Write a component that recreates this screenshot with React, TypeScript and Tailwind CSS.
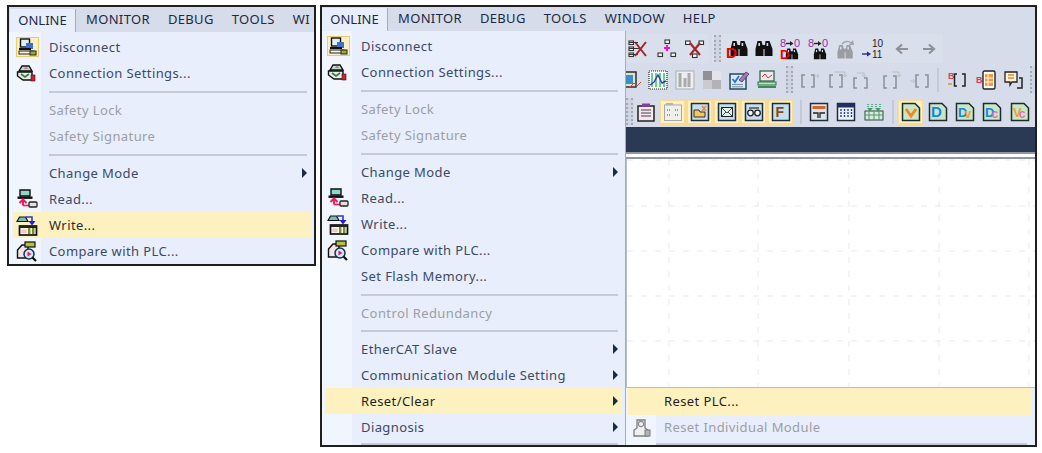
import type { ReactNode } from "react";

const FONT = "font-['Noto_Sans','Open_Sans',sans-serif]";

function Ico({ children, w = 20, h = 20, pad = 0 }: { children: ReactNode; w?: number; h?: number; pad?: number }) {
  return (
    <svg width={w} height={h + pad * 2} viewBox={`0 ${-pad} ${w} ${h + pad * 2}`} className="shrink-0">
      {children}
    </svg>
  );
}

/* ---- menu icons ---- */
const DisconnectIcon = () => (
  <span className="flex h-[20px] w-[23px] items-center justify-center border border-[#ecc96c] bg-[#fdf0c4]">
    <Ico w={19} h={18}>
      <rect x="2.5" y="1" width="9" height="8" fill="#dff0f7" stroke="#111" strokeWidth="1.4" />
      <rect x="8" y="5" width="7" height="6" fill="#3d6fd0" />
      <rect x="1" y="10" width="12" height="2" fill="#111" />
      <rect x="1" y="13" width="14" height="3" fill="#f5f5f0" stroke="#222" />
      <rect x="12" y="13" width="6" height="4" fill="#9dad2e" stroke="#222" />
    </Ico>
  </span>
);
const ConnSettingsIcon = () => (
  <Ico>
    <path d="M3 8 L6 3 H13 L16 8 Z" fill="#b9dcc8" stroke="#111" strokeWidth="1.4" />
    <path d="M8 6 L10 3.5 L12 6 Z" fill="#d86b9a" />
    <path d="M1.5 9 H16 V17 H7 L1.5 13 Z" fill="#e7efe2" stroke="#111" strokeWidth="1.4" />
    <path d="M5 11 L9 14 L13 11" fill="none" stroke="#2d7d4a" strokeWidth="1.6" />
    <rect x="15" y="12" width="4" height="6" fill="#d3202c" stroke="#411" strokeWidth="0.6" />
  </Ico>
);
const ReadIcon = () => (
  <Ico w={22} h={20}>
    <path d="M4 1 H14 V7 H4 Z" fill="#8fd6c7" stroke="#111" strokeWidth="1.4" />
    <rect x="1.5" y="7.5" width="15" height="2.4" fill="#111" />
    <path d="M7 16.5 V12 M3.5 14 L7 10.5 L10.5 14" stroke="#ef1d5e" strokeWidth="2" fill="none" />
    <path d="M7 16.5 H14" stroke="#ef1d5e" strokeWidth="1.6" fill="none" />
    <rect x="13" y="13" width="8" height="5" rx="1" fill="#e9dde0" stroke="#222" strokeWidth="1.3" />
  </Ico>
);
const WriteIcon = () => (
  <Ico w={22} h={21}>
    <path d="M1 6.5 L3.5 2 H9.5 L12 6.5 Z" fill="#78bdb6" stroke="#111" strokeWidth="1.2" />
    <path d="M10 2 H16 V6" stroke="#2f37d8" strokeWidth="1.6" fill="none" />
    <path d="M12.5 6 H19.5 L16 10.5 Z" fill="#2518e6" />
    <rect x="3.5" y="11" width="17" height="9" fill="#f7f5df" stroke="#111" strokeWidth="1.7" />
    <rect x="3.5" y="11" width="17" height="2" fill="#222" />
    <rect x="5.5" y="14.5" width="5" height="3.5" fill="#f4c5cf" />
    <rect x="12" y="13" width="2.4" height="6" fill="#7e8d2b" />
    <rect x="16" y="13" width="2.4" height="6" fill="#7e8d2b" />
  </Ico>
);
const CompareIcon = () => (
  <Ico w={22} h={21}>
    <path d="M1.5 9 L6 4 H12 V17 H1.5 Z" fill="#f5e5e8" stroke="#111" strokeWidth="1.4" />
    <rect x="9" y="1" width="10" height="5" fill="#b6c23a" stroke="#111" strokeWidth="1.2" />
    <circle cx="13" cy="13" r="5" fill="#cdeaf4" stroke="#17324f" strokeWidth="1.5" />
    <path d="M11.5 10.5 L15.5 13 L11.5 15.5 Z" fill="#e5175e" />
    <path d="M16.5 16.5 L20 20" stroke="#111" strokeWidth="2.2" />
  </Ico>
);
const ResetModuleIcon = () => (
  <Ico w={20} h={20}>
    <path d="M2 12 L5 10 V2 H13 V10 L16 12 V18 H2 Z" fill="#eef0f3" stroke="#7d7d7d" strokeWidth="1.3" />
    <circle cx="9" cy="6" r="2.6" fill="none" stroke="#8d8d8d" strokeWidth="1.1" />
    <rect x="13" y="12" width="5" height="6" fill="#b3b3b3" stroke="#7d7d7d" />
  </Ico>
);

/* ---- toolbar icons ---- */
const Boxes = ({ pts, stroke = "#333" }: { pts: number[][]; stroke?: string }) => (
  <>
    {pts.map(([x, y], i) => (
      <rect key={i} x={x} y={y} width="4.5" height="3.5" fill="#f4f6fa" stroke={stroke} strokeWidth="1.1" />
    ))}
  </>
);
const ListX = () => (
  <Ico>
    <Boxes pts={[[1, 2], [1, 8], [1, 14]]} />
    <path d="M1 3 H10 V4 H1 Z M1 9 H11 V10 H1 Z M1 15 H10 V16 H1 Z" fill="#333" />
    <path d="M7 3 L18 17 M18 3 L7 17" stroke="#a3262a" strokeWidth="2" />
  </Ico>
);
const NodeAdd = () => (
  <Ico>
    <Boxes pts={[[8, 1], [1, 14], [14, 14]]} />
    <path d="M7 9 H13 M10 6 V12" stroke="#ef10d0" strokeWidth="2" />
  </Ico>
);
const NodeX = () => (
  <Ico>
    <Boxes pts={[[0.6, 2], [14, 2], [7.5, 15]]} />
    <path d="M5 4 L15 16 M15 4 L5 16" stroke="#a3262a" strokeWidth="2.2" />
  </Ico>
);
const Binoc = ({ x = 0, y = 0, c = "#111", s = 1 }: { x?: number; y?: number; c?: string; s?: number }) => (
  <g transform={`translate(${x} ${y}) scale(${s})`} fill={c}>
    <path d="M2.5 0 H6.5 L8.5 8 V15 H0.5 V8 Z" />
    <path d="M10.5 0 H14.5 L17.5 8 V15 H9.5 V8 Z" />
    <rect x="7" y="4" width="4" height="4" />
    <rect x="3.4" y="2" width="1.6" height="3" fill="#d8dcec" />
    <rect x="11.6" y="2" width="1.6" height="3" fill="#d8dcec" />
  </g>
);
const TinyLabel = ({ x, y, fill, size, children, weight }: { x: number; y: number; fill: string; size: number; children: ReactNode; weight?: number }) => (
  <text x={x} y={y} fill={fill} fontSize={size} fontWeight={weight} fontFamily="Liberation Sans, sans-serif">
    {children}
  </text>
);
const BinocD = () => (
  <Ico w={22} h={20} pad={3}>
    <Binoc x={4} y={2} />
    <TinyLabel x={0} y={19} fill="#ee0000" size={15} weight={700}>D</TinyLabel>
  </Ico>
);
const BinocPlain = () => (
  <Ico w={20} h={20}>
    <Binoc x={1} y={2} />
  </Ico>
);
const BinocHex = ({ red }: { red?: boolean }) => (
  <Ico w={22} h={20} pad={3}>
    <TinyLabel x={0} y={8} fill="#9a2fa8" size={11}>8</TinyLabel>
    <path d="M6 4.5 H11" stroke="#222" strokeWidth="1.4" />
    <path d="M10 2 L13.5 4.5 L10 7 Z" fill="#222" />
    <TinyLabel x={14} y={8} fill="#9a2fa8" size={11}>0</TinyLabel>
    <Binoc x={5.5} y={9.5} s={0.72} />
    {red && <TinyLabel x={0} y={20} fill="#ee0000" size={13} weight={700}>D</TinyLabel>}
  </Ico>
);
const BinocGrey = () => (
  <Ico w={20} h={22}>
    <path d="M6 6 A6 6 0 0 1 15 5" stroke="#a0a4ab" strokeWidth="1.4" fill="none" />
    <path d="M13 7 L18 7 L17 2 Z" fill="#a0a4ab" />
    <Binoc x={1} y={7} c="#9a9ea4" s={0.9} />
  </Ico>
);
const Convert = () => (
  <Ico w={24} h={21} pad={2}>
    <TinyLabel x={10} y={9} fill="#222" size={10}>10</TinyLabel>
    <path d="M0 16 H6" stroke="#1a2a9a" strokeWidth="1.4" />
    <path d="M5 13.5 L9 16 L5 18.5 Z" fill="#1a2a9a" />
    <TinyLabel x={10} y={20} fill="#222" size={10}>11</TinyLabel>
  </Ico>
);
const ArrowG = ({ right }: { right?: boolean }) => (
  <Ico w={14} h={12}>
    <path d={right ? "M1 6 H11 M7 1.5 L12 6 L7 10.5" : "M13 6 H3 M7 1.5 L2 6 L7 10.5"} stroke="#8e9298" strokeWidth="2.2" fill="none" />
  </Ico>
);
const PartialTrend = () => (
  <Ico w={16} h={20}>
    <rect x="-4" y="2" width="14" height="15" fill="#d5e6cf" stroke="#222" strokeWidth="1.4" />
    <rect x="0" y="5" width="7" height="9" fill="#3d8fc2" />
    <path d="M4 17 L8 13 L11 16 L15 12" stroke="#d4413b" strokeWidth="1" fill="none" />
  </Ico>
);
const ChartIcon = ({ grey }: { grey?: boolean }) => (
  <Ico>
    <rect x="1" y="1" width="18" height="18" fill={grey ? "#eceef1" : "#fff"} stroke={grey ? "#b5b7bb" : "#222"} strokeWidth="1.2" strokeDasharray={grey ? "none" : "1 1"} />
    {grey ? (
      <path d="M5 3 V17 M10 8 V17 M14 3 V17" stroke="#a8aaae" strokeWidth="3" />
    ) : (
      <>
        <path d="M4 3 V17 M8 3 V17 M12 3 V17 M16 3 V17" stroke="#1bc25a" strokeWidth="1.4" />
        <path d="M2 15 L6 12 L10 5 L14 13 L18 11" stroke="#3a2fc0" strokeWidth="1.4" fill="none" />
      </>
    )}
  </Ico>
);
const CheckersGrey = () => (
  <Ico>
    <rect x="1" y="1" width="9" height="9" fill="#8f9195" />
    <rect x="10" y="1" width="9" height="9" fill="#e3e4e8" />
    <rect x="1" y="10" width="9" height="9" fill="#c9cbcf" />
    <rect x="10" y="10" width="9" height="9" fill="#b1b3b7" />
  </Ico>
);
const NoteEdit = () => (
  <Ico>
    <rect x="1" y="4" width="16" height="15" fill="#d7e8f7" stroke="#274860" strokeWidth="1.5" />
    <path d="M3.5 9 L6 12 L10 6" stroke="#1f77d0" strokeWidth="1.8" fill="none" />
    <path d="M3 14.5 H14 M3 16.8 H14" stroke="#7a93a8" />
    <path d="M10 10 L17 2 L20 4 L13 12 Z" fill="#a678b8" stroke="#402050" strokeWidth="0.7" />
  </Ico>
);
const PcGreen = () => (
  <Ico>
    <rect x="3" y="1" width="14" height="10" fill="#f4e9e4" stroke="#2d6a4e" strokeWidth="1.3" />
    <path d="M5 7 L8 4 L11 8 L15 5" stroke="#d13b52" strokeWidth="1" fill="none" />
    <rect x="1" y="12" width="18" height="3" fill="#c3e3b7" stroke="#2d6a4e" />
    <rect x="1" y="16" width="18" height="2" fill="#3c8a5b" />
  </Ico>
);
const Bracket = ({ d, arrow }: { d: string; arrow: string }) => (
  <Ico>
    <path d={d} stroke="#8c9097" strokeWidth="1.5" fill="none" />
    <path d={arrow} stroke="#bcbfc4" strokeWidth="1" fill="none" />
  </Ico>
);
const BitBracket = () => (
  <Ico>
    <TinyLabel x={0} y={9} fill="#e33d5a" size={9} weight={700}>B</TinyLabel>
    <path d="M0 14 H4" stroke="#ef8a2b" strokeWidth="1.5" />
    <path d="M9 4 H6.5 V16 H9 M14 4 H17 V16 H14" stroke="#222" strokeWidth="1.5" fill="none" />
  </Ico>
);
const BitSheet = () => (
  <Ico>
    <TinyLabel x={0} y={13} fill="#ee2d60" size={9} weight={700}>B</TinyLabel>
    <rect x="7" y="1" width="12" height="18" rx="1.5" fill="#fff" stroke="#222" strokeWidth="1.4" />
    <rect x="9" y="4" width="8" height="12" fill="#f59a3a" />
    <path d="M9 8 H17 M9 12 H17 M12 4 V16" stroke="#fff" />
  </Ico>
);
const Balloon = () => (
  <Ico>
    <path d="M1 2 H13 V12 H8 L6 15 V12 H1 Z" fill="#fff3d8" stroke="#222" strokeWidth="1.3" />
    <path d="M4 5 H10 M4 8 H10" stroke="#e8862b" strokeWidth="1.4" />
    <path d="M15 8 H18 V18 H13" stroke="#222" strokeWidth="1.5" fill="none" />
  </Ico>
);
const Clip = () => (
  <Ico>
    <rect x="2" y="4" width="16" height="15" fill="#f6e7ef" stroke="#222" strokeWidth="1.5" />
    <rect x="6" y="1.5" width="8" height="3" fill="#8a3fa0" />
    <path d="M5 8 H15 M5 11 H15 M5 14 H15" stroke="#444" />
  </Ico>
);
const Tile = ({ children, bg = "#c5dff0" }: { children: ReactNode; bg?: string }) => (
  <Ico>
    <rect x="1.5" y="1.5" width="17" height="17" fill={bg} stroke="#1f2d3a" strokeWidth="1.5" />
    {children}
  </Ico>
);
const GreyGrid = () => (
  <Ico>
    <rect x="1.5" y="3" width="17" height="15.5" fill="#efefec" stroke="#a9a9a4" />
    <rect x="3" y="1" width="7" height="2" fill="#b6b6b0" />
    <path d="M4 8 H8 M12 8 H16 M4 13 H8 M12 13 H16" stroke="#9c9c98" strokeDasharray="1 1" strokeWidth="2" />
  </Ico>
);
const ToolTiles = [
  <Tile key="folder">
    <path d="M4 8 H9 L10 10 H15 V15 H4 Z" fill="#f3c75e" stroke="#222" strokeWidth="0.9" />
    <path d="M12 4 L16 9 M16 4 L12 9" stroke="#f0874a" strokeWidth="1.6" />
  </Tile>,
  <Tile key="mail">
    <rect x="4.5" y="5.5" width="11" height="9" fill="#e5f0e7" stroke="#222" />
    <path d="M5 6 L10 11 L15 6 M5 14 L9 10 M15 14 L11 10" stroke="#2d5b49" fill="none" />
  </Tile>,
  <Tile key="glasses">
    <circle cx="6.5" cy="11" r="2.8" fill="#f4f4f4" stroke="#222" strokeWidth="1.3" />
    <circle cx="13.5" cy="11" r="2.8" fill="#f4f4f4" stroke="#222" strokeWidth="1.3" />
    <path d="M5 6 H15" stroke="#444" strokeWidth="1.4" />
  </Tile>,
  <Tile key="f">
    <TinyLabel x={4.5} y={15} fill="#8a4a12" size={14} weight={700}>F</TinyLabel>
  </Tile>,
];
const LayoutTile = () => (
  <Tile bg="#dde4ea">
    <rect x="3.5" y="4" width="13" height="3" fill="#d4682c" />
    <path d="M4 11 H9 V16 M11 16 V11 H16" stroke="#222" strokeWidth="1.3" fill="none" />
  </Tile>
);
const DotsTile = () => (
  <Tile bg="#eef5fb">
    <rect x="1.5" y="1.5" width="17" height="4" fill="#1f2f6a" />
    <path d="M5 7 V16 M8.5 7 V16 M12 7 V16 M15.5 7 V16" stroke="#2238d8" strokeWidth="1.4" strokeDasharray="2 1" />
  </Tile>
);
const NetTile = () => (
  <Ico>
    <path d="M4 2 V6 M8 2 V6 M12 2 V6 M16 2 V6" stroke="#2c9a5e" strokeWidth="1.4" strokeDasharray="1 1" />
    <path d="M3 6 H9 L6 9 Z M11 6 H17 L14 9 Z" fill="#31a465" />
    <rect x="1" y="9" width="18" height="9" fill="#d6ecdc" stroke="#2d4a3c" />
    <path d="M1 13 H19 M5 9 V18 M10 9 V18 M15 9 V18" stroke="#5b8f72" />
  </Ico>
);
const Doc = ({ bg, label, color, second, secondColor }: { bg: string; label: string; color: string; second?: string; secondColor?: string }) => (
  <Ico>
    <path d="M1.5 1.5 H14 L18.5 6 V18.5 H1.5 Z" fill={bg} stroke="#1f2d2a" strokeWidth="1.5" />
    <text x={3} y={15} fill={color} fontSize={second ? 13 : 15} fontWeight={700} fontFamily="Liberation Sans, sans-serif">
      {label}
      {second && (
        <tspan dx={-3} dy={1} fill={secondColor ?? color} fontSize={12}>
          {second}
        </tspan>
      )}
    </text>
  </Ico>
);
const DocCheck = () => (
  <Ico>
    <path d="M1.5 1.5 H14 L18.5 6 V18.5 H1.5 Z" fill="#c9e6c7" stroke="#1f2d2a" strokeWidth="1.5" />
    <path d="M5 7 L10 14 L15 7" stroke="#f08a1f" strokeWidth="3" fill="none" />
  </Ico>
);

/* ---- toolbar layout pieces ---- */
function Slot({ className = "w-[27px]", children }: { className?: string; children: ReactNode }) {
  return <div className={`flex shrink-0 items-center justify-center ${className}`}>{children}</div>;
}
const Grip = ({ className = "" }: { className?: string }) => (
  <div className={`h-[27px] w-[7px] shrink-0 border-x-2 border-dotted border-[#a3a8b2] bg-[#cfd5e2] ${className}`} />
);
const Divider = ({ className = "" }: { className?: string }) => (
  <div className={`h-[24px] w-[2px] shrink-0 bg-[#c3c9d6] ${className}`} />
);
const Hi = ({ children }: { children: ReactNode }) => (
  <div className="flex h-[26px] w-[27px] shrink-0 items-center justify-center border-2 border-[#f8dc95] bg-[#fdf1c8]">
    {children}
  </div>
);

function Toolbars() {
  return (
    <div className="flex h-[96px] shrink-0 flex-col bg-[#d6dce9] pt-[2px]">
      <div className="flex h-[31px] items-center">
        <div className="flex h-[29px] w-[83px] items-center rounded-r-sm bg-[#d9dfeb]">
          <Slot className="w-[24px]"><ListX /></Slot>
          <Slot className="ml-[3px] w-[28px]"><NodeAdd /></Slot>
          <Slot className="w-[28px]"><NodeX /></Slot>
        </div>
        <div className="ml-[3px] flex h-[29px] w-[231px] items-center bg-[#d9dfeb]">
          <Grip className="ml-[2px] mr-[2px]" />
          <Slot className="w-[27px]"><BinocD /></Slot>
          <Slot className="w-[27px]"><BinocPlain /></Slot>
          <Slot className="w-[28px]"><BinocHex red /></Slot>
          <Slot className="w-[28px]"><BinocHex /></Slot>
          <Slot className="w-[26px]"><BinocGrey /></Slot>
          <Slot className="w-[29px]"><Convert /></Slot>
          <Slot className="w-[27px]"><ArrowG /></Slot>
          <Slot className="w-[27px]"><ArrowG right /></Slot>
        </div>
      </div>
      <div className="flex h-[31px] items-center">
        <Slot className="w-[18px] justify-start"><PartialTrend /></Slot>
        <Slot><ChartIcon /></Slot>
        <Slot><ChartIcon grey /></Slot>
        <Slot><CheckersGrey /></Slot>
        <Slot><NoteEdit /></Slot>
        <Slot className="w-[29px]"><PcGreen /></Slot>
        <Grip className="ml-[5px] mr-[3px]" />
        <Slot className="w-[28px]"><Bracket d="M5 5 H2 V17 H5 M11 5 H14 V17 H11" arrow="M14 6 H19 M17 4 L19 6 L17 8" /></Slot>
        <Slot className="w-[28px]"><Bracket d="M5 5 H2 V17 H5 M11 5 H14 V17 H11" arrow="M6 2 H17 V7 M15 5 L17 7 L19 5" /></Slot>
        <Slot className="w-[20px]"><Bracket d="M5 8 H2 V18 H5 M12 8 H15 V18 H12" arrow="M5 3 H12 V7 M10 5 L12 7 L14 5" /></Slot>
        <Slot className="ml-[6px] w-[28px]"><Bracket d="M5 6 H2 V18 H5 M11 6 H14 V18 H11" arrow="M10 2 H17 V7 M15 5 L17 7 L19 5" /></Slot>
        <Slot className="w-[28px]"><Bracket d="M9 5 H6 V17 H9 M15 5 H18 V17 H15" arrow="M0 11 H5 M3 9 L5 11 L3 13" /></Slot>
        <Divider className="ml-[3px] mr-[5px]" />
        <Slot className="w-[28px]"><BitBracket /></Slot>
        <Slot className="w-[28px]"><BitSheet /></Slot>
        <Slot className="w-[28px]"><Balloon /></Slot>
        <Grip className="ml-[2px]" />
      </div>
      <div className="mt-[1px] flex h-[31px] items-center">
        <Grip />
        <Slot className="w-[26px]"><Clip /></Slot>
        <Hi><GreyGrid /></Hi>
        {ToolTiles.map((t) => <Hi key={t.key}>{t}</Hi>)}
        <Divider className="ml-[6px] mr-[3px]" />
        <Slot><LayoutTile /></Slot>
        <Slot className="w-[28px]"><DotsTile /></Slot>
        <Slot className="w-[28px]"><NetTile /></Slot>
        <Divider className="ml-[4px] mr-[3px]" />
        <Hi><DocCheck /></Hi>
        <Slot><Doc bg="#c9e6c7" label="D" color="#1585e8" /></Slot>
        <Slot><Doc bg="#c9e6c7" label="D" color="#1585e8" second="v" secondColor="#e8a23a" /></Slot>
        <Slot className="w-[28px]"><Doc bg="#c9e6c7" label="D" color="#1585e8" second="c" secondColor="#e46cc8" /></Slot>
        <Slot><Doc bg="#c9e6c7" label="V" color="#e8a23a" second="c" secondColor="#e46cc8" /></Slot>
      </div>
    </div>
  );
}

/* ---- menus ---- */
type Item = {
  label?: string;
  icon?: ReactNode;
  disabled?: boolean;
  arrow?: boolean;
  hot?: boolean;
  sep?: boolean;
  sepClass?: string;
};

function MenuRows({ items, rowX, slotW, sepX, hotText }: { items: Item[]; rowX: string; slotW: string; sepX: string; hotText?: string }) {
  return (
    <>
      {items.map((it, i) =>
        it.sep ? (
          <div key={i} className={`flex items-center ${sepX} ${it.sepClass ?? "h-[11px]"}`}>
            <div className="h-[2px] w-full bg-[#c4cad7]" />
          </div>
        ) : (
          <div key={i} className={`flex h-[26px] items-center ${rowX} ${it.hot ? "bg-[#fdf2bf]" : ""}`}>
            <div className={`flex shrink-0 items-center justify-start ${slotW}`}>{it.icon}</div>
            <span className={`flex-1 text-[13px] leading-none tracking-[0.4px] ${it.disabled ? "text-[#9c9ea3]" : it.hot ? (hotText ?? "text-[#2c2c2c]") : "text-[#3c4a66]"}`}>
              {it.label}
            </span>
            {it.arrow && <div className="mr-[3px] h-0 w-0 border-y-[5px] border-l-[5px] border-y-transparent border-l-[#1c2b45]" />}
          </div>
        ),
      )}
    </>
  );
}

function MenuBar({ labels, tabClass, barClass }: { labels: string[]; tabClass: string; barClass: string }) {
  return (
    <div className={`flex shrink-0 items-end gap-[18px] overflow-hidden bg-[#d6dce9] ${barClass}`}>
      <div className={`-mr-[8px] flex w-[66px] shrink-0 items-center justify-center border-r border-[#a5adbc] bg-[#e8eefb] text-[13px] text-[#1d2a44] ${tabClass}`}>
        ONLINE
      </div>
      {labels.map((l) => (
        <span key={l} className="flex h-[24px] shrink-0 items-center text-[13px] tracking-[0.35px] text-[#1d2a44]">
          {l}
        </span>
      ))}
    </div>
  );
}

const leftItems: Item[] = [
  { label: "Disconnect", icon: <DisconnectIcon /> },
  { label: "Connection Settings...", icon: <ConnSettingsIcon /> },
  { sep: true },
  { label: "Safety Lock", disabled: true },
  { label: "Safety Signature", disabled: true },
  { sep: true },
  { label: "Change Mode", arrow: true },
  { label: "Read...", icon: <ReadIcon /> },
  { label: "Write...", icon: <WriteIcon />, hot: true },
  { label: "Compare with PLC...", icon: <CompareIcon /> },
];

const rightItems: Item[] = [
  { label: "Disconnect", icon: <DisconnectIcon /> },
  { label: "Connection Settings...", icon: <ConnSettingsIcon /> },
  { sep: true },
  { label: "Safety Lock", disabled: true },
  { label: "Safety Signature", disabled: true },
  { sep: true },
  { label: "Change Mode", arrow: true },
  { label: "Read...", icon: <ReadIcon /> },
  { label: "Write...", icon: <WriteIcon /> },
  { label: "Compare with PLC...", icon: <CompareIcon /> },
  { label: "Set Flash Memory..." },
  { sep: true },
  { label: "Control Redundancy", disabled: true },
  { sep: true, sepClass: "h-[10px]" },
  { label: "EtherCAT Slave", arrow: true },
  { label: "Communication Module Setting", arrow: true },
  { label: "Reset/Clear", arrow: true, hot: true },
  { label: "Diagnosis", arrow: true },
];

function Canvas() {
  return (
    <div className="min-h-0 flex-1 border-l border-[#b5bdcc] bg-white">
      <svg width="100%" height="100%">
        {[42, 131, 222, 312, 402].map((x) => (
          <line key={x} x1={x} y1={0} x2={x} y2={228} stroke="#e6e9ee" strokeDasharray="6 8" />
        ))}
        {[1, 47, 92, 137, 182].map((y) => (
          <line key={y} x1={0} y1={y} x2={410} y2={y} stroke="#e6e9ee" strokeDasharray="6 8" />
        ))}
      </svg>
    </div>
  );
}

export default function App() {
  return (
    <div className={`flex h-[453px] w-[1042px] items-start gap-[4px] overflow-hidden bg-white pl-[7px] pt-[5px] ${FONT}`}>
      {/* small window */}
      <div className="flex h-[261px] w-[309px] shrink-0 flex-col overflow-hidden border-2 border-[#1f1f1f] bg-[#d6dce9]">
        <MenuBar labels={["MONITOR", "DEBUG", "TOOLS", "WI"]} barClass="h-[25px] pl-[1px]" tabClass="h-[23px]" />
        <div className="flex-1 bg-[linear-gradient(to_right,#f1f5fd_32px,#e8eefb_32px)] pt-[2px]">
          <MenuRows items={leftItems} rowX="ml-[4px] mr-[3px] pl-[3px] pr-[1px]" slotW="w-[33px]" sepX="pl-[40px] pr-[7px]" />
        </div>
      </div>

      {/* main window */}
      <div className="flex h-[442px] w-[717px] shrink-0 flex-col overflow-hidden border-2 border-[#1f1f1f] bg-[#d6dce9]">
        <MenuBar labels={["MONITOR", "DEBUG", "TOOLS", "WINDOW", "HELP"]} barClass="h-[24px]" tabClass="h-[23px]" />
        <div className="flex min-h-0 flex-1">
          <div className="w-[304px] shrink-0 border-r border-[#a5adbc] bg-[linear-gradient(to_right,#f1f5fd_30px,#e8eefb_30px)] pt-[2px]">
            <MenuRows items={rightItems} rowX="ml-[3px] mr-[3px] pl-[2px] pr-[1px]" slotW="w-[34px]" sepX="pl-[39px] pr-[7px]" hotText="text-[#1f1f1f]" />
            <div className="flex h-[5px] items-end pl-[39px] pr-[7px]">
              <div className="h-[2px] w-full bg-[#c4cad7]" />
            </div>
          </div>
          <div className="flex min-w-0 flex-1 flex-col">
            <Toolbars />
            <div className="h-[25px] shrink-0 bg-[#2a3a55]" />
            <div className="h-[7px] shrink-0 border-y-2 border-[#8f96a3] bg-white" />
            <Canvas />
            <div className="h-[58px] shrink-0 border-t border-[#b5bdcc] bg-[linear-gradient(to_right,#f1f5fd_30px,#e8eefb_30px)]">
              <div className="ml-[2px] mr-[3px] flex h-[27px] items-center bg-[#fdf2bf] pl-[36px] text-[13px] tracking-[0.4px] text-[#1f1f1f]">
                Reset PLC...
              </div>
              <div className="flex h-[26px] items-center pl-[6px] text-[13px] tracking-[0.4px] text-[#9c9ea3]">
                <div className="w-[32px] shrink-0"><ResetModuleIcon /></div>
                Reset Individual Module
              </div>
              <div className="ml-[30px] mr-[8px] mt-[2px] h-[2px] bg-[#c4cad7]" />
            </div>
          </div>
        </div>
      </div>
    </div>
  );
}
